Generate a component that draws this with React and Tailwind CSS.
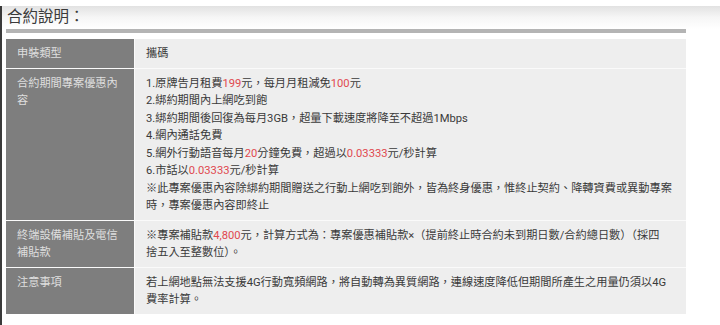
const rows = [
  {
    label: "申裝類型",
    content: [["攜碼"]],
  },
  {
    label: "合約期間專案優惠內容",
    content: [
      ["1.原牌告月租費", { red: "199" }, "元，每月月租減免", { red: "100" }, "元"],
      ["2.綁約期間內上網吃到飽"],
      ["3.綁約期間後回復為每月3GB，超量下載速度將降至不超過1Mbps"],
      ["4.網內通話免費"],
      ["5.網外行動語音每月", { red: "20" }, "分鐘免費，超過以", { red: "0.03333" }, "元/秒計算"],
      ["6.市話以", { red: "0.03333" }, "元/秒計算"],
      ["※此專案優惠內容除綁約期間贈送之行動上網吃到飽外，皆為終身優惠，惟終止契約、降轉資費或異動專案"],
      ["時，專案優惠內容即終止"],
    ],
  },
  {
    label: "終端設備補貼及電信補貼款",
    content: [
      ["※專案補貼款", { red: "4,800" }, "元，計算方式為：專案優惠補貼款×（提前終止時合約未到期日數/合約總日數）（採四"],
      ["捨五入至整數位）。"],
    ],
  },
  {
    label: "注意事項",
    content: [
      ["若上網地點無法支援4G行動寬頻網路，將自動轉為異質網路，連線速度降低但期間所產生之用量仍須以4G"],
      ["費率計算。"],
    ],
  },
];

function Line({ parts }) {
  return (
    <div className="whitespace-nowrap">
      {parts.map((p, i) =>
        typeof p === "string" ? (
          <span key={i}>{p}</span>
        ) : (
          <span key={i} className="text-[#e0484e]">{p.red}</span>
        )
      )}
    </div>
  );
}

export default function App() {
  return (
    <div
      className="w-[720px] h-[325px] overflow-hidden bg-white"
      style={{ fontFamily: 'Roboto, "Noto Sans CJK TC", sans-serif' }}
    >
      <div className="h-[6px] bg-white" />

      <div className="border-l-2 border-[#3a3a3a] h-[319px]">
        {/* title band */}
        <div className="h-[23px] bg-gradient-to-b from-[#e2e2e2] via-[#f6f6f6] to-white pl-[5px] flex items-center">
          <h1 className="text-[15.5px] leading-none text-[#3a3a3a]">合約說明：</h1>
        </div>

        <div className="w-[680px] ml-[4px]">
          <div className="h-[4px] bg-[#b4b4b4]" />

          <div className="mt-[6px] flex flex-col gap-px bg-[#fafafa]">
            {rows.map((r) => (
              <div key={r.label} className="flex gap-px text-[11.2px] leading-[17.5px]">
                <div className="w-[128px] shrink-0 bg-[#7e7e7e] text-[#dedede] pl-[11px] pr-[12px] pt-[6px] pb-[5px]">
                  {r.label}
                </div>
                <div className="flex-1 bg-[#eeeeee] text-[#3a3a3a] pl-[11px] pr-[8px] pt-[6px] pb-[5px] overflow-hidden">
                  {r.content.map((parts, i) => (
                    <Line key={i} parts={parts} />
                  ))}
                </div>
              </div>
            ))}
          </div>
        </div>
      </div>
    </div>
  );
}
